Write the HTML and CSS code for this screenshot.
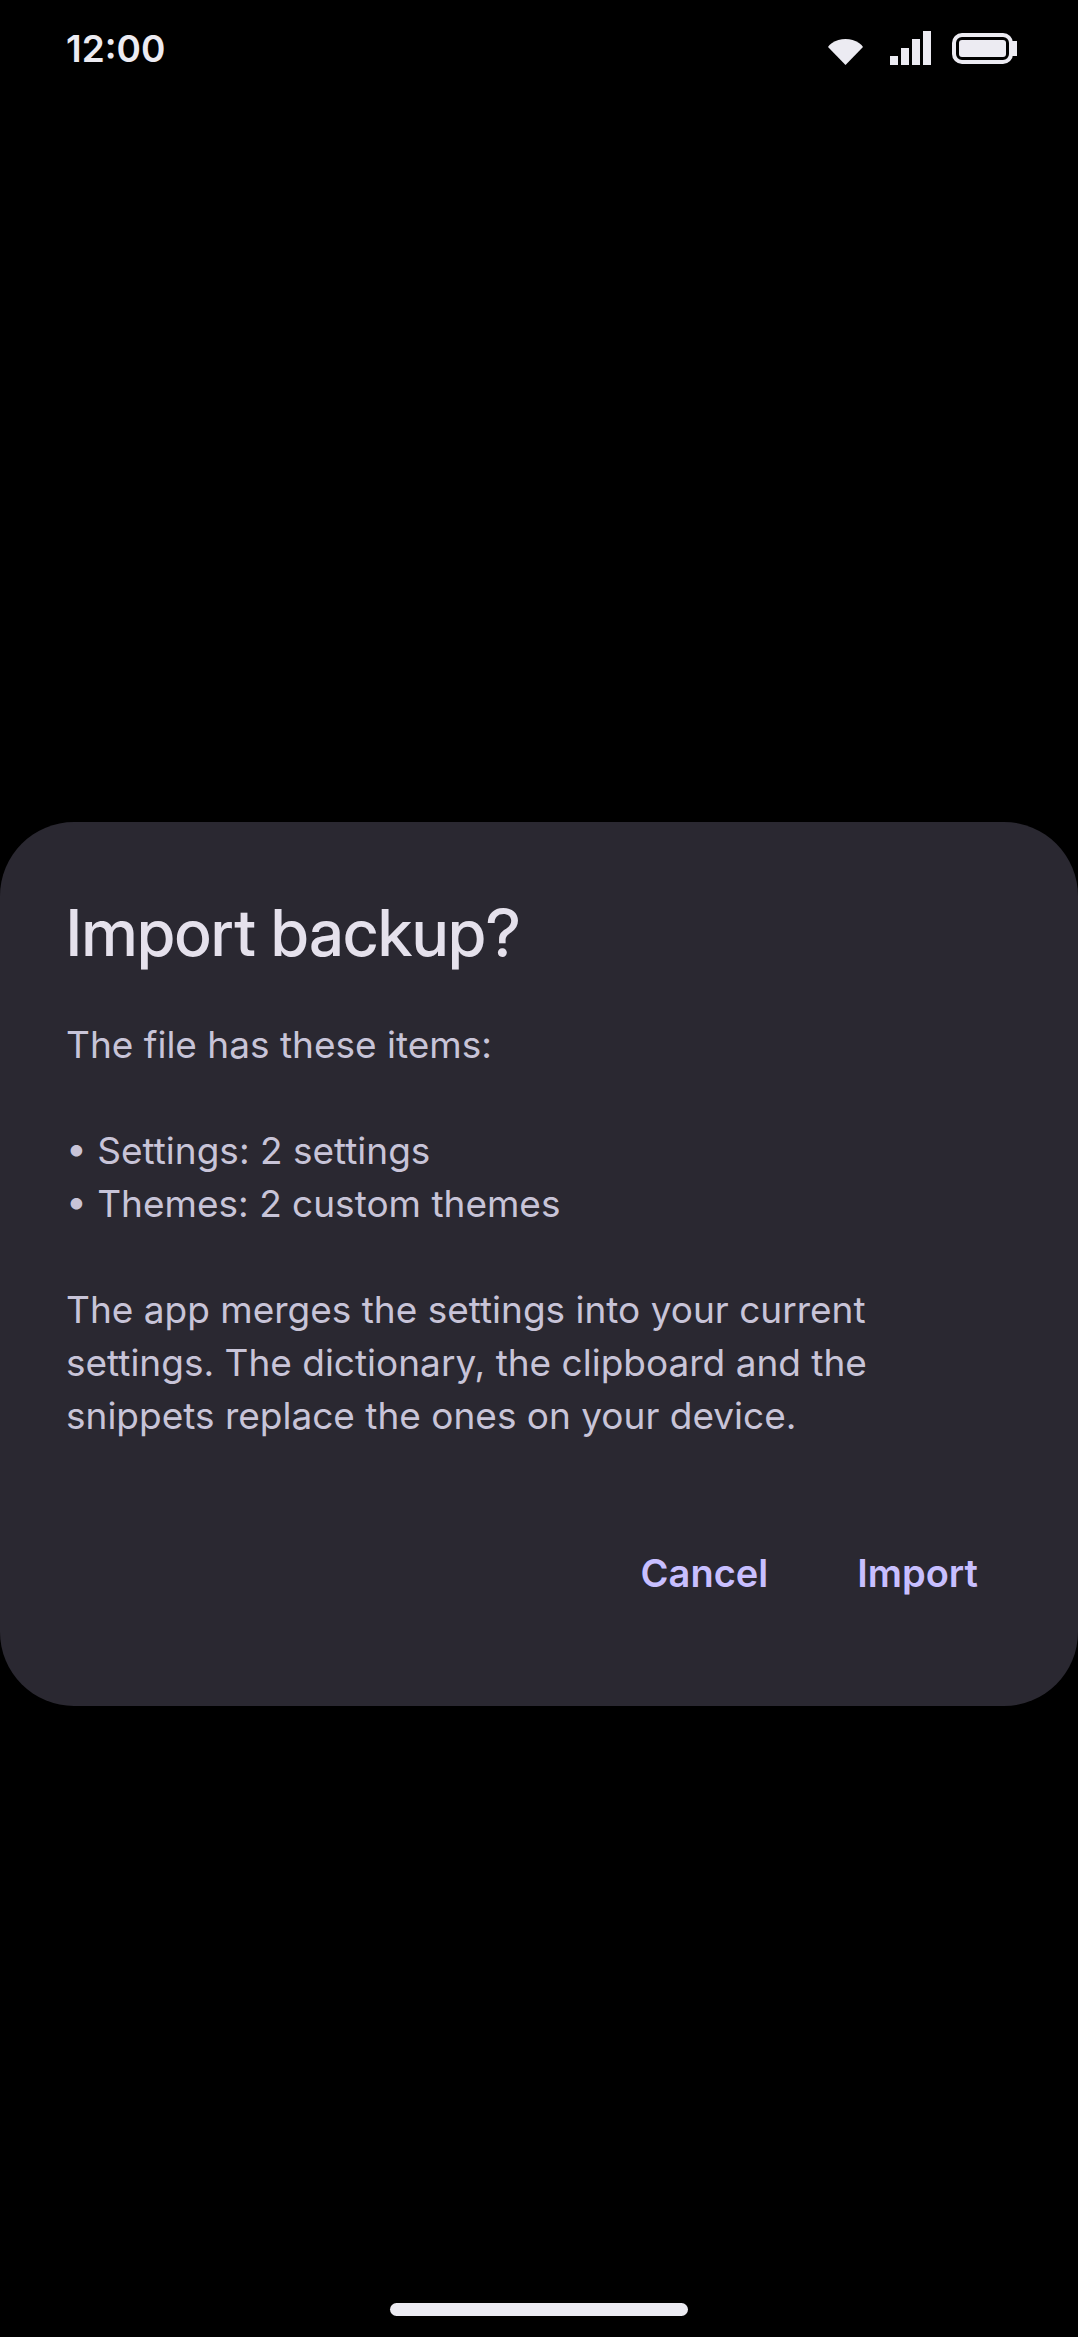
FILE: index.html
```html
<!DOCTYPE html>
<html lang="en">
<head>
<meta charset="utf-8">
<meta name="viewport" content="width=device-width, initial-scale=1">
<title>Import backup</title>
<link rel="stylesheet" href="styles.css">
</head>
<body>
<header class="status-bar">
  <time class="clock">12:00</time>
  <div class="status-icons">
    <svg class="wifi" viewBox="0 0 35 34" aria-hidden="true"><path d="M17.500 34 0 16Q1 14 4 12Q10 8 17.500 8Q25 8 31 12Q34 14 35 16Z"/></svg>
    <svg class="signal" viewBox="0 0 41 34" aria-hidden="true"><path d="M0 25h8v9H0zM11 17h8v17h-8zM22 8h8v26h-8zM33 0h8v34h-8z"/></svg>
    <svg class="battery" viewBox="0 0 65 34" aria-hidden="true"><rect class="battery-case" x="2" y="4" width="57" height="27" rx="8"/><rect x="7" y="9" width="47" height="17" rx="3"/><path d="M60 10h5v15h-5z"/></svg>
  </div>
</header>
<main class="stage">
  <section class="dialog" role="dialog" aria-labelledby="dialog-title">
    <h1 class="title" id="dialog-title">Import backup?</h1>
    <div class="message">
      <p>The file has these items:</p>
      <ul class="items">
        <li>• Settings: 2 settings</li>
        <li>• Themes: 2 custom themes</li>
      </ul>
      <p>The app merges the settings into your current settings. The dictionary, the clipboard and the snippets replace the ones on your device.</p>
    </div>
    <div class="actions">
      <button class="action" type="button">Cancel</button>
      <button class="action" type="button">Import</button>
    </div>
  </section>
</main>
<footer class="nav-bar"><div class="handle"></div></footer>
</body>
</html>
```
FILE: styles.css
```css
* { box-sizing: border-box; }
body {
  margin: 0;
  min-height: 100vh;
  display: flex;
  flex-direction: column;
  background: #000;
  font-family: Inter, sans-serif;
}
.status-bar {
  display: flex;
  align-items: center;
  justify-content: space-between;
  height: 96px;
  padding: 0 61px 0 66px;
  color: #ecebf2;
}
.clock { font-size: 37px; font-weight: 600; }
.status-icons { display: flex; align-items: center; fill: currentColor; }
.wifi { width: 35px; height: 34px; margin-right: 27px; }
.signal { width: 41px; height: 34px; margin-right: 21px; }
.battery { width: 65px; height: 34px; }
.battery-case { fill: none; stroke: currentColor; stroke-width: 4; }
.stage {
  flex: 1;
  display: flex;
  flex-direction: column;
  justify-content: center;
  padding-top: 164px;
}
.dialog { padding: 79px 66px; border-radius: 74px; background: #2a2831; }
.title {
  margin: 0 0 53px;
  font-family: "Inter Display", Inter, sans-serif;
  font-size: 65px;
  line-height: 64px;
  font-weight: 500;
  color: #e5e1ec;
}
.message {
  display: grid;
  gap: 53px;
  font-size: 37px;
  line-height: 53px;
  color: #c8c4d8;
}
.message p { margin: 0; }
.items { margin: 0; padding: 0; list-style: none; }
.actions { display: flex; justify-content: flex-end; gap: 21px; margin-top: 79px; }
.action {
  height: 106px;
  padding: 0 34px;
  border: 0;
  background: none;
  font: 600 38px/53px Inter, sans-serif;
  color: #c8bfff;
}
.nav-bar { display: flex; justify-content: center; padding: 36px 0 21px; }
.handle { width: 298px; height: 13px; border-radius: 7px; background: #ecebf2; }
```
